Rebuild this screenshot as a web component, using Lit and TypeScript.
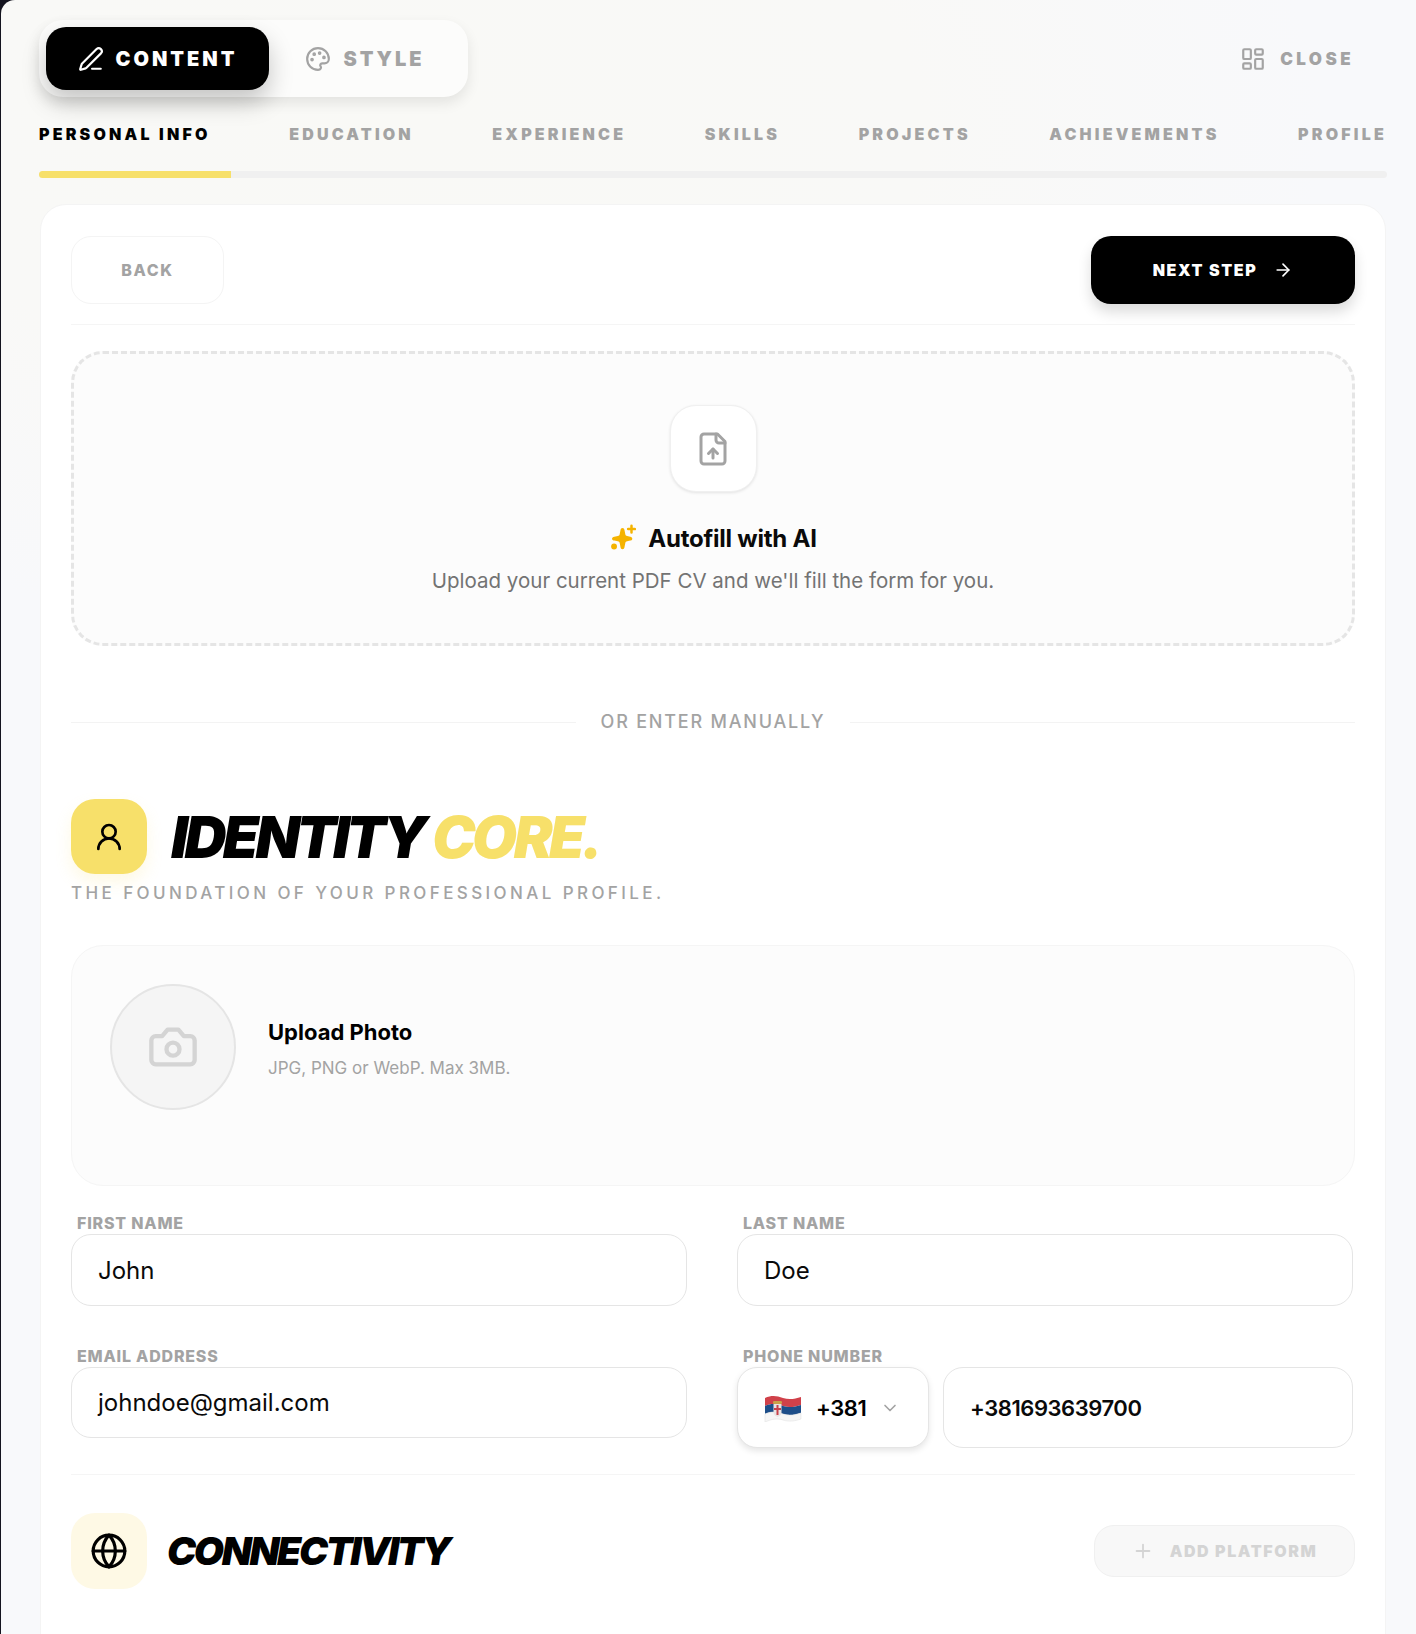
import { LitElement, html, css, svg } from "lit";
import { customElement } from "lit/decorators.js";

const ic = (body: unknown, cls = "") => html`<svg class="ic ${cls}" viewBox="0 0 24 24" fill="none" stroke="currentColor" stroke-linecap="round" stroke-linejoin="round">${body}</svg>`;

const icons = {
  pen: svg`<path d="M13 21h8"/><path d="M21.17 6.81a2.83 2.83 0 0 0-4-4L3.84 16.17a2 2 0 0 0-.5.83l-1.32 4.35a.5.5 0 0 0 .62.62l4.35-1.32a2 2 0 0 0 .83-.5z"/>`,
  palette: svg`<path d="M12 22a10 10 0 1 1 10-10c0 2.5-2 4-4 4h-2.2a1.8 1.8 0 0 0-1.3 3c.6.7.3 3-2.5 3z"/><circle cx="13.5" cy="6.5" r=".7" fill="currentColor"/><circle cx="17.5" cy="10.5" r=".7" fill="currentColor"/><circle cx="6.5" cy="12.5" r=".7" fill="currentColor"/><circle cx="8.5" cy="7.5" r=".7" fill="currentColor"/>`,
  layout: svg`<rect x="3" y="3" width="7" height="9" rx="1"/><rect x="14" y="3" width="7" height="5" rx="1"/><rect x="14" y="12" width="7" height="9" rx="1"/><rect x="3" y="16" width="7" height="5" rx="1"/>`,
  arrow: svg`<path d="M5 12h14"/><path d="m12 5 7 7-7 7"/>`,
  fileUp: svg`<path d="M15 2H6a2 2 0 0 0-2 2v16a2 2 0 0 0 2 2h12a2 2 0 0 0 2-2V7z"/><path d="M14 2v4a2 2 0 0 0 2 2h4"/><path d="M12 18v-6"/><path d="m9 15 3-3 3 3"/>`,
  user: svg`<circle cx="12" cy="8" r="5"/><path d="M20 21a8 8 0 0 0-16 0"/>`,
  camera: svg`<path d="M14.5 4h-5L7 7H4a2 2 0 0 0-2 2v9a2 2 0 0 0 2 2h16a2 2 0 0 0 2-2V9a2 2 0 0 0-2-2h-3z"/><circle cx="12" cy="13" r="3"/>`,
  chevron: svg`<path d="m6 9 6 6 6-6"/>`,
  globe: svg`<circle cx="12" cy="12" r="10"/><path d="M12 2a14.5 14.5 0 0 0 0 20 14.5 14.5 0 0 0 0-20"/><path d="M2 12h20"/>`,
  plus: svg`<path d="M5 12h14"/><path d="M12 5v14"/>`,
};

const tabs = ["PERSONAL INFO", "EDUCATION", "EXPERIENCE", "SKILLS", "PROJECTS", "ACHIEVEMENTS", "PROFILE"];

@customElement("app-root")
export class AppRoot extends LitElement {
  static styles = css`
    :host { display: block; height: 1634px; overflow: hidden; background: #14141f; font-family: Inter, "Noto Sans", sans-serif; color: #0a0a0a; }
    * { box-sizing: border-box; }
    .ic { display: block; flex: none; }
    .window { margin-left: 1px; height: 1634px; padding: 20px 29px 0 38px; border-top-left-radius: 14px;
      background: radial-gradient(ellipse 900px 520px at 30% 8%, #f9f9f6 0%, #f9f9f7 55%, #f8f9fb 100%), #f8f9fb; }
    .top { display: flex; justify-content: space-between; align-items: center; height: 77px; }
    .pill { display: flex; align-items: center; width: 429px; height: 77px; padding: 7px; background: #fcfcfb; border-radius: 24px; box-shadow: 0 6px 14px rgba(0,0,0,.09); }
    .mode { display: flex; align-items: center; justify-content: center; gap: 12px; height: 63px; font-size: 20px; font-weight: 900; letter-spacing: .15em; border-radius: 20px; }
    .mode.on { width: 223px; background: #000; color: #fff; box-shadow: 0 12px 24px rgba(0,0,0,.22); }
    .mode.off { flex: 1; color: #a3a3a3; }
    .mode .ic { width: 26px; height: 26px; stroke-width: 2; }
    .close { display: flex; align-items: center; gap: 14px; margin-right: 33px; color: #a3a3a3; font-size: 17px; font-weight: 900; letter-spacing: .2em; }
    .close .ic { width: 26px; height: 26px; stroke-width: 2; }
    .tabs { display: flex; justify-content: space-between; margin-top: 27px; height: 20px; line-height: 20px; font-size: 16px; font-weight: 900; letter-spacing: .2em; color: #a3a3a3; }
    .tabs .on { color: #000; }
    .bar { height: 7px; margin-top: 27px; background: #f0f0f0; border-radius: 4px; overflow: hidden; }
    .bar div { width: 192px; height: 100%; background: #f7e06a; }
    .card { margin: 26px 1px 0 1px; height: 1500px; padding: 31px 30px; background: #fff; border: 1px solid #f4f4f4; border-radius: 26px; }
    .nav { display: flex; justify-content: space-between; padding-bottom: 20px; border-bottom: 1px solid #f5f5f5; }
    .back, .next { display: flex; align-items: center; justify-content: center; height: 68px; border-radius: 20px; font-size: 16px; font-weight: 800; letter-spacing: .1em; }
    .back { width: 153px; color: #a3a3a3; border: 1px solid #f4f4f4; }
    .next { width: 264px; gap: 16px; background: #000; color: #fff; font-weight: 900; box-shadow: 0 8px 14px rgba(0,0,0,.14); }
    .next .ic { width: 20px; height: 20px; stroke-width: 2; }
    .drop { display: flex; flex-direction: column; align-items: center; margin-top: 26px; height: 295px; padding-top: 51px; background: #fcfcfc; border: 3px dashed #e5e5e5; border-radius: 32px; }
    .fileb { display: flex; align-items: center; justify-content: center; width: 87px; height: 87px; background: #fff; border: 1px solid #f0f0f0; border-radius: 26px; color: #a3a3a3; box-shadow: 0 1px 3px rgba(0,0,0,.1); }
    .fileb .ic { width: 36px; height: 36px; stroke-width: 2; }
    .dt { display: flex; align-items: center; gap: 12px; margin-top: 29px; height: 34px; font-size: 24px; font-weight: 700; letter-spacing: -.01em; color: #0a0a0a; }
    .spark { width: 27px; height: 27px; flex: none; margin-top: -2px; }
    .ds { margin-top: 11px; font-size: 20.5px; line-height: 30px; color: #737373; }
    .or { display: flex; align-items: center; gap: 25px; margin-top: 62px; font-size: 18px; line-height: 28px; font-weight: 500; letter-spacing: .1em; color: #a3a3a3; white-space: nowrap; }
    .or i { flex: 1; height: 1px; background: #f3f3f3; }
    .hd { display: flex; align-items: center; gap: 24px; margin-top: 63px; }
    .hi { display: flex; align-items: center; justify-content: center; width: 76px; height: 75px; flex: none; border-radius: 24px; background: #f7e06a; color: #000; box-shadow: 0 8px 16px rgba(247,224,106,.18); }
    .hi .ic { width: 32px; height: 32px; stroke-width: 2; }
    h1, h2 { margin: 0; font-weight: 900; font-style: italic; color: #000; white-space: nowrap; }
    h1 { font-size: 58px; line-height: 70px; letter-spacing: -.06em; }
    h1 span { color: #f7e06a; }
    .sub { margin-top: 8px; font-size: 17px; line-height: 22px; font-weight: 500; letter-spacing: .2em; color: #a3a3a3; }
    .up { display: flex; gap: 32px; margin-top: 41px; height: 241px; padding: 38px; background: #fcfcfc; border: 1px solid #f5f5f5; border-radius: 32px; }
    .av { display: flex; align-items: center; justify-content: center; width: 126px; height: 126px; flex: none; border-radius: 50%; background: #f5f5f5; border: 2px solid #e5e5e5; color: #d4d4d4; }
    .av .ic { width: 52px; height: 52px; stroke-width: 2; }
    .upt { padding-top: 32px; }
    .upt b { display: block; font-size: 22px; line-height: 32px; font-weight: 700; color: #000; }
    .upt p { margin: 8px 0 0; font-size: 17px; line-height: 24px; color: #a3a3a3; }
    .grid { display: grid; grid-template-columns: 616px 616px; column-gap: 50px; row-gap: 39px; margin-top: 26px; padding-bottom: 26px; border-bottom: 1px solid #f5f5f5; }
    label { display: block; margin-left: 6px; height: 22px; line-height: 22px; font-size: 16px; font-weight: 800; letter-spacing: .05em; color: #a3a3a3; }
    .f { display: flex; align-items: center; padding: 0 26px; height: 71px; margin-top: 0; border: 1px solid #e5e5e5; border-radius: 20px; background: #fff; font-size: 24px; color: #0a0a0a; }
    .f.a { height: 72px; }
    .ph { display: flex; gap: 14px; }
    .cc { display: flex; align-items: center; width: 192px; height: 81px; padding-left: 26px; border: 1px solid #e5e5e5; border-radius: 20px; background: #fff; font-size: 22px; font-weight: 600; letter-spacing: -.02em; color: #000; box-shadow: 0 3px 6px rgba(0,0,0,.1); }
    .flag { width: 38px; height: 28px; flex: none; margin-right: 14px; }
    .cc .ic { width: 20px; height: 20px; margin-left: 14px; color: #a3a3a3; stroke-width: 2; }
    .f.n { flex: 1; height: 81px; font-size: 22px; font-weight: 600; letter-spacing: -.02em; }
    .cn { display: flex; align-items: center; gap: 20px; margin-top: 38px; }
    .cn .hi { background: #fef9e5; box-shadow: none; height: 76px; }
    .cn .hi .ic { width: 38px; height: 38px; }
    h2 { flex: 1; font-size: 39px; line-height: 48px; letter-spacing: -.06em; }
    .add { display: flex; align-items: center; justify-content: center; gap: 16px; width: 261px; height: 52px; background: #f8f8f8; border: 1px solid #f0f0f0; border-radius: 20px; color: #d4d4d4; font-size: 16px; font-weight: 900; letter-spacing: .1em; }
    .add .ic { width: 22px; height: 22px; stroke-width: 2; }
  `;

  render() {
    return html`<div class="window">
      <div class="top">
        <div class="pill">
          <div class="mode on">${ic(icons.pen)}CONTENT</div>
          <div class="mode off">${ic(icons.palette)}STYLE</div>
        </div>
        <div class="close">${ic(icons.layout)}CLOSE</div>
      </div>
      <div class="tabs">${tabs.map((t, i) => html`<span class=${i === 0 ? "on" : ""}>${t}</span>`)}</div>
      <div class="bar"><div></div></div>
      <div class="card">
        <div class="nav">
          <div class="back">BACK</div>
          <div class="next">NEXT STEP${ic(icons.arrow)}</div>
        </div>
        <div class="drop">
          <div class="fileb">${ic(icons.fileUp)}</div>
          <div class="dt">
            <svg class="spark" viewBox="0 0 24 24" fill="#f5b300"><path d="M12.5 2.5c1 0 1.6.8 1.8 2l.7 3.6c.2.9.7 1.4 1.6 1.6l2.8.6c1.1.2 1.8.9 1.8 1.7s-.7 1.5-1.8 1.7l-2.8.6c-.9.2-1.4.7-1.6 1.6l-.7 3.6c-.2 1.2-.8 2-1.8 2s-1.6-.8-1.8-2l-.7-3.6c-.2-.9-.7-1.4-1.6-1.6l-3.2-.6C4 13.500 3.200 12.800 3.200 12s.8-1.500 2-1.700l3.200-.6c.9-.2 1.400-.7 1.600-1.600l.7-3.600c.2-1.200.8-2 1.800-2z" transform="translate(-.5 1)"/><circle cx="4.500" cy="20" r="2.600"/><path d="M20 1.500v6M17 4.500h6" stroke="#f5b300" stroke-width="2.200" stroke-linecap="round" fill="none"/></svg>
            Autofill with AI
          </div>
          <div class="ds">Upload your current PDF CV and we'll fill the form for you.</div>
        </div>
        <div class="or"><i></i>OR ENTER MANUALLY<i></i></div>
        <div class="hd">
          <div class="hi">${ic(icons.user)}</div>
          <h1>IDENTITY <span>CORE.</span></h1>
        </div>
        <div class="sub">THE FOUNDATION OF YOUR PROFESSIONAL PROFILE.</div>
        <div class="up">
          <div class="av">${ic(icons.camera)}</div>
          <div class="upt"><b>Upload Photo</b><p>JPG, PNG or WebP. Max 3MB.</p></div>
        </div>
        <div class="grid">
          <div><label>FIRST NAME</label><div class="f a">John</div></div>
          <div><label>LAST NAME</label><div class="f a">Doe</div></div>
          <div><label>EMAIL ADDRESS</label><div class="f">johndoe@gmail.com</div></div>
          <div><label>PHONE NUMBER</label>
            <div class="ph">
              <div class="cc">
                <svg class="flag" viewBox="0 0 38 28">
                  <path d="M1 4c7-3 12-2 18 0s12 1 18-1v8c-6 2-12 3-18 1S8 9 1 12z" fill="#d0414a"/>
                  <path d="M1 12c7-3 12-2 18 0s12 1 18-1v8c-6 2-12 3-18 1S8 17 1 20z" fill="#1d4e89"/>
                  <path d="M1 20c7-3 12-2 18 0s12 1 18-1v6c-6 2-12 3-18 1S8 25 1 28z" fill="#f6f6f6" stroke="#e2e2e2" stroke-width=".6"/>
                  <rect x="9" y="7" width="9" height="3" rx="1.200" fill="#c9a24a"/>
                  <path d="M9.500 10h8v8.500c0 2-2 3.500-4 4.500-2-1-4-2.500-4-4.500z" fill="#e9e4e4"/>
                  <path d="M12.500 11h2v3h2.500v2h-2.500v5h-2v-5h-2.500v-2h2.500z" fill="#c8414b"/>
                </svg>
                +381${ic(icons.chevron)}
              </div>
              <div class="f n">+381693639700</div>
            </div>
          </div>
        </div>
        <div class="cn">
          <div class="hi">${ic(icons.globe)}</div>
          <h2>CONNECTIVITY</h2>
          <div class="add">${ic(icons.plus)}ADD PLATFORM</div>
        </div>
      </div>
    </div>`;
  }
}
